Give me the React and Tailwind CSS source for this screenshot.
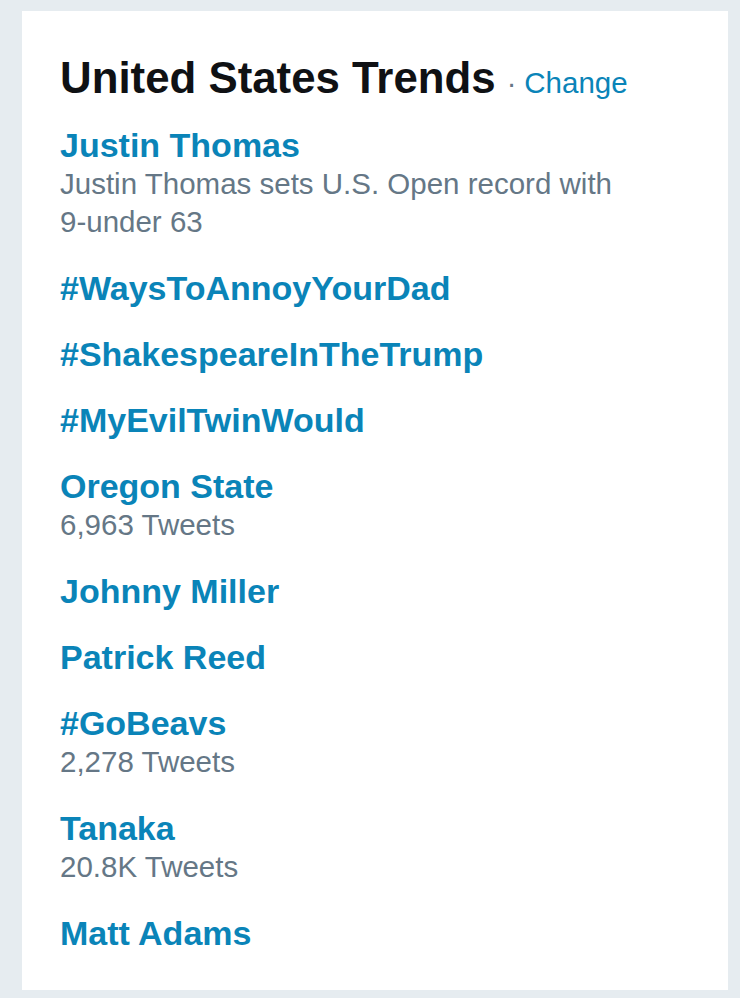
const TRENDS = [
  { name: 'Justin Thomas', sub: <>Justin Thomas sets U.S. Open record with <span className="whitespace-nowrap">9-under</span> 63</> },
  { name: '#WaysToAnnoyYourDad' },
  { name: '#ShakespeareInTheTrump' },
  { name: '#MyEvilTwinWould' },
  { name: 'Oregon State', sub: '6,963 Tweets' },
  { name: 'Johnny Miller' },
  { name: 'Patrick Reed' },
  { name: '#GoBeavs', sub: '2,278 Tweets' },
  { name: 'Tanaka', sub: '20.8K Tweets' },
  { name: 'Matt Adams' },
]

export default function App() {
  return (
    <div
      className="h-[998px] w-[740px] overflow-hidden bg-[#e6ecf0] pt-[11px] pl-[22px]"
      style={{ fontFamily: '"Liberation Sans", Arial, sans-serif' }}
    >
      <div className="h-[979px] w-[706px] bg-white pt-[42px] pl-[38px] pr-[38px]">
        <div className="flex items-baseline">
          <h2 className="text-[43.8px] leading-[50px] font-bold text-[#0f1114]">
            United States Trends
          </h2>
          <span className="ml-[11px] text-[29px] text-[#657786]">·</span>
          <a className="ml-[8px] text-[29.5px] text-[#0a84b8]">Change</a>
        </div>

        <ul className="mt-[20px] flex flex-col gap-[28px]">
          {TRENDS.map(t => (
            <li key={t.name}>
              <div className="text-[34px] leading-[38px] font-bold text-[#0a84b8]">{t.name}</div>
              {t.sub && (
                <div className="mt-[1px] text-[29.5px] leading-[38px] text-[#657786]">{t.sub}</div>
              )}
            </li>
          ))}
        </ul>
      </div>
    </div>
  )
}
